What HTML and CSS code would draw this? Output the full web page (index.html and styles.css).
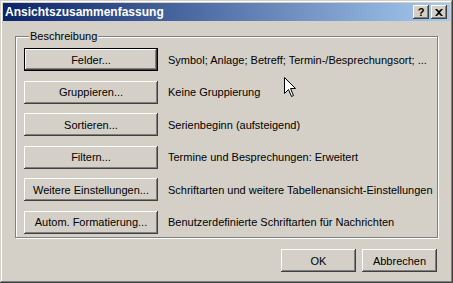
FILE: index.html
```html
<!DOCTYPE html>
<html lang="de">
<head>
<meta charset="utf-8">
<title>Ansichtszusammenfassung</title>
<link rel="stylesheet" href="styles.css">
</head>
<body>
<div class="window">
  <div class="titlebar">
    <span class="title">Ansichtszusammenfassung</span>
    <div class="title-buttons">
      <button class="tbtn help">?</button>
      <button class="tbtn close">
        <svg width="8" height="7" viewBox="0 0 8 7"><path d="M0 0h2l2 2 2-2h2L5 3.5 8 7H6L4 5 2 7H0l3-3.5z" fill="#000"/></svg>
      </button>
    </div>
  </div>
  <div class="content">
    <div class="group">
      <span class="legend">Beschreibung</span>
      <div class="rows">
        <div class="row"><button class="btn default">Felder...</button><span class="desc">Symbol; Anlage; Betreff; Termin-/Besprechungsort; ...</span></div>
        <div class="row"><button class="btn">Gruppieren...</button><span class="desc">Keine Gruppierung</span></div>
        <div class="row"><button class="btn">Sortieren...</button><span class="desc">Serienbeginn (aufsteigend)</span></div>
        <div class="row"><button class="btn">Filtern...</button><span class="desc">Termine und Besprechungen: Erweitert</span></div>
        <div class="row"><button class="btn">Weitere Einstellungen...</button><span class="desc">Schriftarten und weitere Tabellenansicht-Einstellungen</span></div>
        <div class="row"><button class="btn">Autom. Formatierung...</button><span class="desc">Benutzerdefinierte Schriftarten für Nachrichten</span></div>
      </div>
    </div>
    <div class="footer">
      <button class="btn small">OK</button>
      <button class="btn small">Abbrechen</button>
    </div>
  </div>
  <svg class="cursor" width="13" height="21" viewBox="0 0 13 21"><path d="M0.5 0.5V16.5L4.5 12.5L7.5 19.5L9.5 18.5L6.5 11.5H11.5Z" fill="#fff" stroke="#000" stroke-width="1"/></svg>
</div>
</body>
</html>
```
FILE: styles.css
```css
html, body {
  margin: 0;
  padding: 0;
  background: #d4d0c8;
}
.window {
  position: relative;
  width: 453px;
  height: 283px;
  box-sizing: border-box;
  padding: 3px;
  background: #d4d0c8;
  box-shadow: inset -1px -1px #404040, inset 1px 1px #d4d0c8, inset -2px -2px #808080, inset 2px 2px #ffffff;
  font-family: "Liberation Sans", Arial, sans-serif;
  font-size: 11px;
  color: #000;
  display: flex;
  flex-direction: column;
}
.titlebar {
  height: 18px;
  background: linear-gradient(to right, #0a246a, #a6caf0);
  display: flex;
  align-items: center;
  justify-content: space-between;
  padding: 0 3px 0 2px;
}
.title {
  color: #fff;
  font-weight: bold;
  font-size: 12px;
}
.title-buttons {
  display: flex;
  gap: 2px;
}
.tbtn {
  width: 16px;
  height: 14px;
  padding: 0;
  margin: 0;
  border: 0;
  background: #d4d0c8;
  box-shadow: inset -1px -1px #404040, inset 1px 1px #ffffff, inset -2px -2px #808080, inset 2px 2px #d4d0c8;
  display: flex;
  align-items: center;
  justify-content: center;
  font-family: "Liberation Sans", Arial, sans-serif;
  font-weight: bold;
  font-size: 11px;
  line-height: 12px;
  color: #000;
}
.content {
  flex: 1;
  padding: 15px 12px 0;
  display: flex;
  flex-direction: column;
}
.group {
  border: 1px solid #808080;
  box-shadow: inset 1px 1px #ffffff, 1px 1px #ffffff;
  padding: 0 8px 3px;
  height: 202px;
  box-sizing: border-box;
}
.legend {
  display: table;
  margin: -7px 0 0 5px;
  padding: 0 1px;
  line-height: 13px;
  background: #d4d0c8;
}
.rows {
  margin-top: 5px;
  display: flex;
  flex-direction: column;
  gap: 9.6px;
}
.row {
  display: flex;
  align-items: center;
  gap: 10px;
}
.btn {
  width: 134px;
  height: 23px;
  margin: 0;
  padding: 0;
  border: 0;
  background: #d4d0c8;
  box-shadow: inset -1px -1px #404040, inset 1px 1px #ffffff, inset -2px -2px #808080, inset 2px 2px #d4d0c8;
  font-family: "Liberation Sans", Arial, sans-serif;
  font-size: 11px;
  color: #000;
  flex: none;
}
.btn.default {
  border: 1px solid #000;
  box-sizing: border-box;
}
.desc {
  white-space: nowrap;
}
.footer {
  margin-top: 11px;
  display: flex;
  justify-content: flex-end;
  gap: 6px;
  padding-right: 1px;
}
.btn.small {
  width: 75px;
}
.cursor {
  position: absolute;
  left: 284px;
  top: 77px;
}
```
